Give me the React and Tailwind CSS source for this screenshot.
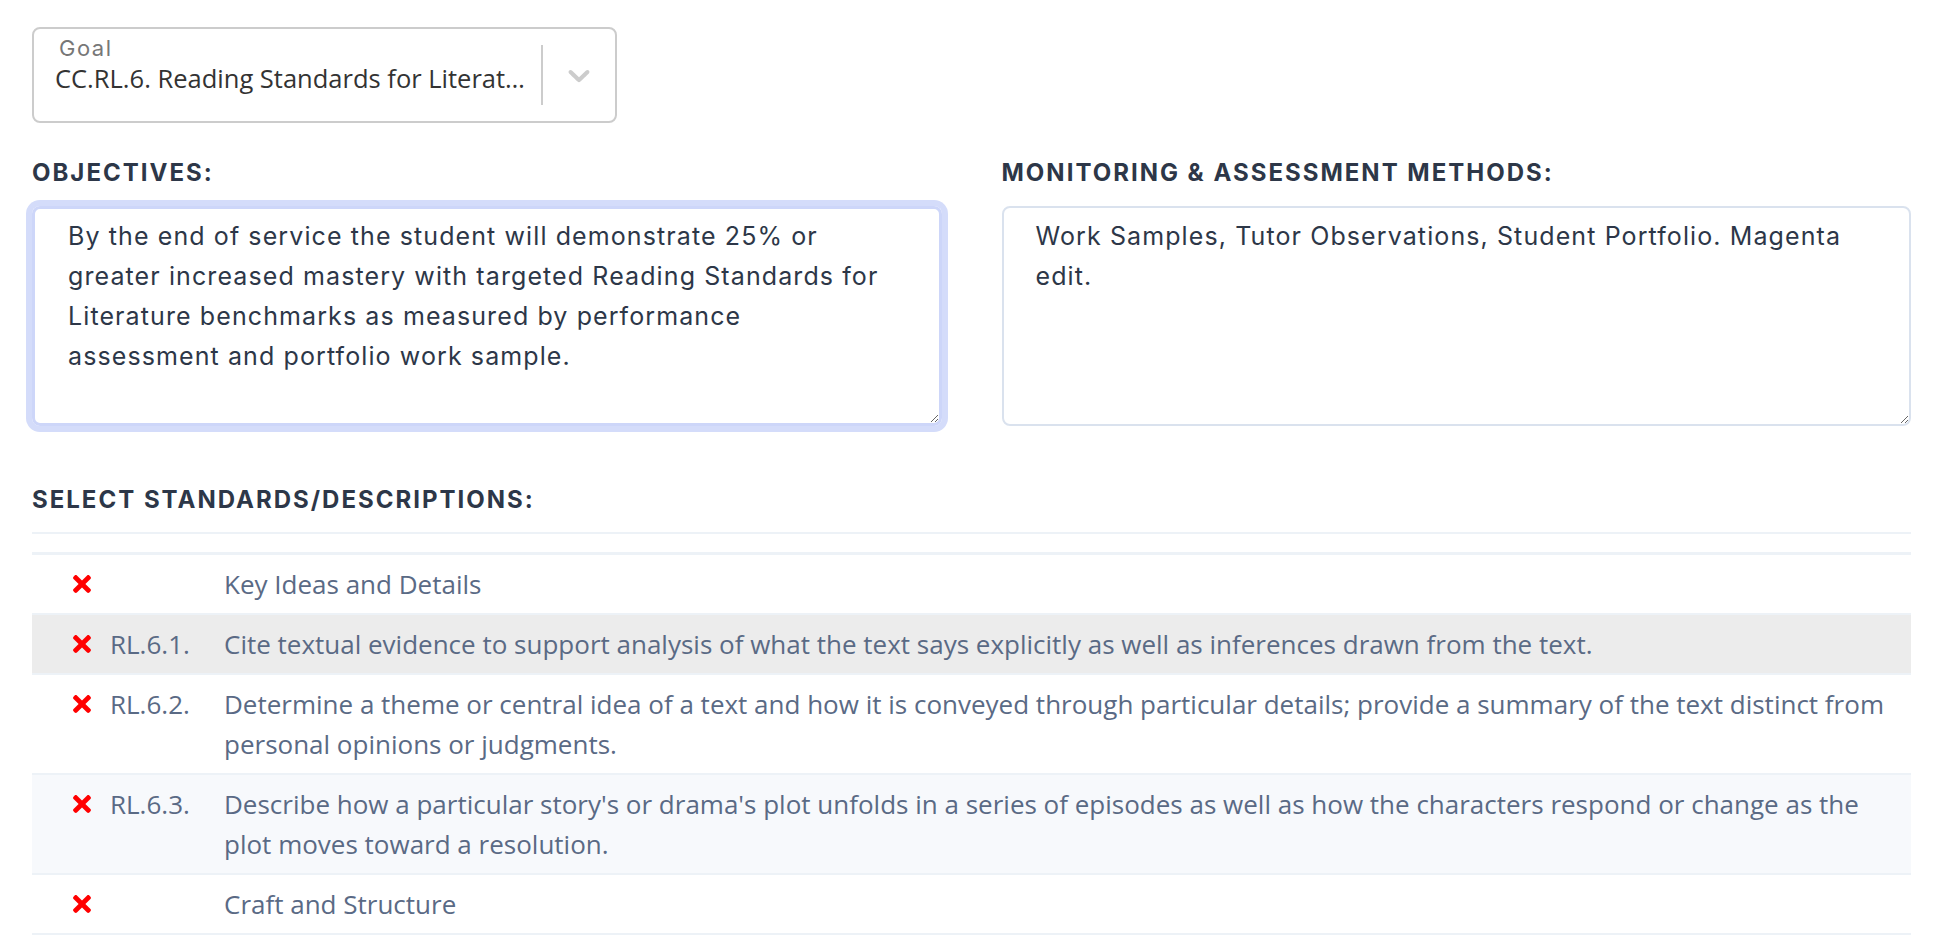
import { useEffect, useRef } from "react";
import { FaTimes } from "react-icons/fa";

const objectives =
  "By the end of service the student will demonstrate 25% or greater increased mastery with targeted Reading Standards for Literature benchmarks as measured by performance assessment and portfolio work sample. ";

const methods =
  "Work Samples, Tutor Observations, Student Portfolio. Magenta edit.";

const rows = [
  { code: "", text: "Key Ideas and Details", bg: "bg-white" },
  {
    code: "RL.6.1.",
    text: "Cite textual evidence to support analysis of what the text says explicitly as well as inferences drawn from the text.",
    bg: "bg-[#ececec]",
  },
  {
    code: "RL.6.2.",
    text: "Determine a theme or central idea of a text and how it is conveyed through particular details; provide a summary of the text distinct from personal opinions or judgments.",
    bg: "bg-white",
  },
  {
    code: "RL.6.3.",
    text: "Describe how a particular story's or drama's plot unfolds in a series of episodes as well as how the characters respond or change as the plot moves toward a resolution.",
    bg: "bg-[#f7f9fc]",
  },
  { code: "", text: "Craft and Structure", bg: "bg-white" },
];

function Chevron() {
  return (
    <svg viewBox="0 0 20 20" className="h-[36px] w-[36px] fill-[#cccccc]">
      <path d="M4.516 7.548c0.436-0.446 1.043-0.481 1.576 0l3.908 3.747 3.908-3.747c0.533-0.481 1.141-0.446 1.574 0 0.436 0.445 0.408 1.197 0 1.615-0.406 0.418-4.695 4.502-4.695 4.502-0.217 0.223-0.502 0.335-0.787 0.335s-0.57-0.112-0.789-0.335c0 0-4.287-4.084-4.695-4.502s-0.436-1.17 0-1.615z" />
    </svg>
  );
}

export default function App() {
  const objRef = useRef(null);

  // 목표 입력란에 포커스를 두고 커서를 끝으로
  useEffect(() => {
    const el = objRef.current;
    if (!el) return;
    el.focus();
    el.setSelectionRange(el.value.length, el.value.length);
  }, []);

  return (
    <div className="min-h-screen bg-white pl-[32px] pr-[23px] pt-[27px] font-[Inter,sans-serif]">
      {/* Goal select */}
      <div className="flex h-[96px] w-[585px] rounded-[8px] border-2 border-[#cccccc] bg-white">
        <div className="flex min-w-0 flex-1 flex-col pl-[21px] pt-[5px]">
          <span className="pl-[4px] text-[22px] leading-[28px] tracking-[1.5px] text-[#777777]">Goal</span>
          <span className="truncate font-['Open_Sans',sans-serif] text-[25.5px] leading-[32px] text-[#333333]">
            CC.RL.6. Reading Standards for Literature Grade 6
          </span>
        </div>
        <div className="my-[16px] ml-[4px] w-[2px] bg-[#cccccc]" />
        <div className="flex w-[72px] items-center justify-center">
          <Chevron />
        </div>
      </div>

      {/* Objectives / Methods */}
      <div className="mt-[35px] grid grid-cols-2 gap-x-[60px]">
        <div>
          <h2 className="text-[24px] font-bold uppercase leading-[30px] tracking-[2px] text-[#2d3748]">
            Objectives:
          </h2>
          <textarea
            ref={objRef}
            defaultValue={objectives}
            className="mt-[18px] block h-[220px] w-full resize-y rounded-[8px] border-[3px] border-[#cdd6f9] pl-[33px] pr-[50px] pt-[7px] text-[25px] leading-[40px] tracking-[1.1px] text-[#2d3748] caret-[#2d3748] outline-none ring-[6px] ring-[#d4dcfa]"
          />
        </div>
        <div>
          <h2 className="text-[24px] font-bold uppercase leading-[30px] tracking-[2px] text-[#2d3748]">
            Monitoring &amp; Assessment Methods:
          </h2>
          <textarea
            defaultValue={methods}
            className="mt-[18px] block h-[220px] w-full resize-y rounded-[8px] border-2 border-[#dae2ee] pl-[32px] pr-[50px] pt-[8px] text-[25px] leading-[40px] tracking-[1.1px] text-[#2d3748] outline-none"
          />
        </div>
      </div>

      {/* Standards */}
      <h2 className="mt-[59px] text-[24px] font-bold uppercase leading-[30px] tracking-[2px] text-[#2d3748]">
        Select Standards/Descriptions:
      </h2>
      <div className="mt-[17px] font-['Open_Sans',sans-serif] text-[26px] leading-[40px] text-[#5a6a85]">
        <div className="h-[23px] border-t-2 border-b-[3px] border-[#edf2f7]" />
        {rows.map((r, i) => (
          <div key={i} className={`flex items-start border-b-2 border-[#edf2f7] py-[9px] ${r.bg}`}>
            <div className="ml-[40px] flex h-[40px] w-[19px] shrink-0 items-center justify-center">
              <FaTimes className="shrink-0 text-[26px] text-[#ff0000]" />
            </div>
            <div className="ml-[19px] w-[114px] shrink-0">{r.code}</div>
            <div className="flex-1 pr-[24px]">{r.text}</div>
          </div>
        ))}
      </div>
    </div>
  );
}
